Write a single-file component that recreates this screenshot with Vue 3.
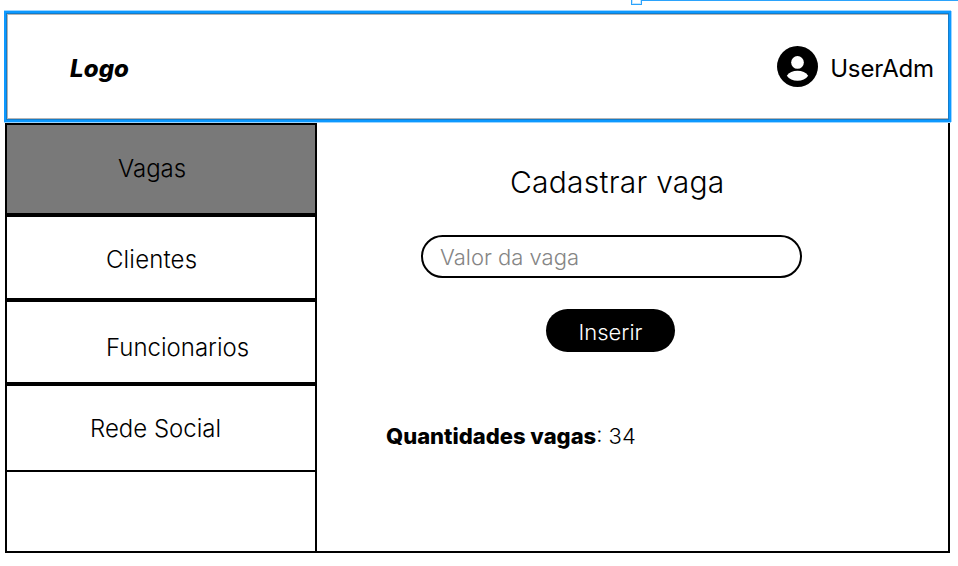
<script setup>
import { ref } from 'vue'

const items = [
  { id: 'vagas', label: 'Vagas' },
  { id: 'clientes', label: 'Clientes' },
  { id: 'funcionarios', label: 'Funcionarios' },
  { id: 'rede', label: 'Rede Social' },
  { id: 'empty', label: '' },
]
const active = ref('vagas')
const valor = ref('')
const total = ref(34)
</script>

<template>
  <div class="canvas">
    <div class="selection-line"></div>
    <div class="selection-handle"></div>
    <header class="header">
      <strong class="logo">Logo</strong>
      <div class="user">
        <svg class="avatar" viewBox="2 2 20 20" aria-hidden="true">
          <circle cx="12" cy="12" r="10" fill="#000" />
          <circle cx="12" cy="10" r="3.1" fill="#fff" />
          <path d="M6.8 16.5C7.8 14.9 9.8 14.1 12 14.1s4.2 .8 5.2 2.4C16.1 18.1 14.2 19 12 19s-4.1-.9-5.2-2.5Z" fill="#fff" />
        </svg>
        <span class="username">UserAdm</span>
      </div>
    </header>
    <div class="body">
      <nav class="sidebar">
        <a
          v-for="item in items"
          :key="item.id"
          class="item"
          :class="[item.id, { active: item.id === active }]"
          @click="active = item.id"
        ><span>{{ item.label }}</span></a>
      </nav>
      <main class="content">
        <h1 class="title">Cadastrar vaga</h1>
        <input v-model="valor" class="field" placeholder="Valor da vaga" />
        <button class="submit">Inserir</button>
        <p class="count"><strong>Quantidades vagas</strong>: {{ total }}</p>
      </main>
    </div>
  </div>
</template>

<style>
body {
  background: #fff;
}
</style>

<style scoped>
.canvas {
  position: relative;
  box-sizing: border-box;
  width: 958px;
  height: 566px;
  padding: 11px 7px 13px 4px;
  overflow: hidden;
  font-family: Inter, sans-serif;
  font-size: 24px;
  font-weight: 300;
  line-height: 30px;
  color: #000;
  white-space: nowrap;
}
.selection-line {
  position: absolute;
  top: 0;
  left: 642px;
  right: 0;
  height: 1px;
  background: #2ba3fc;
}
.selection-handle {
  position: absolute;
  top: -7px;
  left: 631px;
  box-sizing: border-box;
  width: 11px;
  height: 12px;
  border: 1px solid #2ba3fc;
  background: #fff;
  box-shadow: inset 0 0 0 1px #c5e6ff;
}
.header {
  position: relative;
  z-index: 1;
  display: flex;
  align-items: center;
  justify-content: space-between;
  box-sizing: border-box;
  height: 111px;
  padding: 0 15px 0 64px;
  border: 2px solid #0d99ff;
  background: #fff;
  box-shadow:
    0 -1px #9cd5ff,
    0 1px #9cd5ff,
    1px 0 #9cd5ff,
    inset 0 0 0 1px #147cc9,
    inset 2px 0 #b5b5b5,
    inset 0 2px #b5b5b5,
    inset 0 -2px #b5b5b5;
}
.logo {
  font-weight: 800;
  font-style: italic;
  letter-spacing: 0.1px;
  padding-top: 4px;
}
.user {
  display: flex;
  align-items: center;
  gap: 12px;
}
.avatar {
  width: 41px;
  height: 41px;
}
.username {
  padding-top: 4px;
  font-weight: 400;
  letter-spacing: -0.15px;
}
.body {
  display: flex;
  box-sizing: border-box;
  width: 945px;
  height: 431px;
  margin-left: 1px;
  border: 2px solid #000;
  border-top: 0;
}
.sidebar {
  display: flex;
  flex-direction: column;
  flex: none;
  width: 308px;
  padding-top: 1px;
  border-right: 2px solid #000;
}
.item {
  box-sizing: border-box;
  border-bottom: 4px solid #000;
}
.vagas {
  height: 94px;
  padding: 29px 0 0 111px;
  border-top: 2px solid #000;
}
.active {
  background: #797979;
}
.clientes {
  height: 85px;
  padding: 28px 0 0 99px;
  letter-spacing: 0.15px;
}
.funcionarios {
  height: 84px;
  padding: 31px 0 0 99px;
}
.rede {
  height: 86px;
  padding: 28px 0 0 83px;
  border-bottom-width: 2px;
}
.empty {
  flex: 1;
  border-bottom: 0;
}
.content {
  display: flex;
  flex-direction: column;
  align-items: flex-start;
  padding-left: 69px;
}
.title {
  margin: 42px 0 0 124px;
  font-size: 30px;
  font-weight: 300;
  letter-spacing: 0.24px;
  line-height: 36px;
}
.field {
  box-sizing: border-box;
  width: 381px;
  height: 43px;
  margin: 35px 0 0 35px;
  padding: 0 17px;
  border: 2px solid #000;
  border-radius: 22px;
  outline: 0;
  background: #fff;
  font: 300 22px/30px Inter, sans-serif;
}
.field::placeholder {
  color: #858585;
  opacity: 1;
}
.submit {
  width: 129px;
  height: 43px;
  margin: 31px 0 0 160px;
  padding: 2px 0 0;
  border: 0;
  border-radius: 22px;
  background: #000;
  color: #fff;
  font: 300 22px/30px Inter, sans-serif;
}
.count {
  margin: 69px 0 0;
  font-size: 22px;
}
.count strong {
  font-weight: 800;
}
</style>
